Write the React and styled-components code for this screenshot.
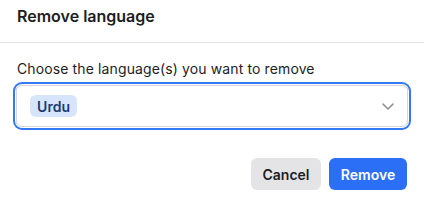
import React from 'react';
import styled, { createGlobalStyle } from 'styled-components';

const GlobalStyle = createGlobalStyle`
    body {
        margin: 0;
        background: #ffffff;
        font-family: Inter, "Liberation Sans", sans-serif;
        color: #1d1d1f;
    }
`;

const Dialog = styled.div`
    width: 424px;
    height: 200px;
    display: flex;
    flex-direction: column;
`;

const Header = styled.div`
    height: 43px;
    box-sizing: border-box;
    padding: 6px 17px 0;
    border-bottom: 1px solid #e3e3e5;
`;

const Title = styled.h2`
    margin: 0;
    font-size: 16px;
    line-height: 21px;
    font-weight: 600;
    color: #1d1d1f;
`;

const Body = styled.div`
    padding: 16px 16px 0;
`;

const Label = styled.label`
    display: block;
    padding-left: 1px;
    font-size: 14px;
    line-height: 20px;
    letter-spacing: 0.12px;
    color: #1d1d1f;
    margin-bottom: 6px;
`;

const SelectBox = styled.div`
    height: 42px;
    box-sizing: border-box;
    display: flex;
    align-items: center;
    justify-content: space-between;
    padding: 0 12px 0 13px;
    border: 1px solid #d6d6da;
    border-radius: 6px;
    box-shadow: 0 0 0 1px #ffffff, 0 0 0 3px #3478f6;
`;

const Chip = styled.span`
    display: inline-flex;
    align-items: center;
    height: 22px;
    padding: 0 7px;
    border-radius: 6px;
    background: #d6e5fc;
    color: #1c3b70;
    font-size: 14px;
    font-weight: 600;
    letter-spacing: 0.1px;
`;

const Footer = styled.div`
    display: flex;
    justify-content: flex-end;
    gap: 8px;
    padding: 31px 17px 0;
`;

const Button = styled.button`
    height: 32px;
    min-width: ${(p) => (p.$primary ? '78px' : '70px')};
    padding: 0 11px;
    border: none;
    border-radius: 6px;
    font-family: inherit;
    font-size: 14px;
    font-weight: 600;
    cursor: pointer;
    background: ${(p) => (p.$primary ? '#2b6ff6' : '#e4e4e7')};
    color: ${(p) => (p.$primary ? '#ffffff' : '#1d1d1f')};
`;

const Chevron = () => (
    <svg width="14" height="14" viewBox="0 0 14 14" fill="none">
        <path d="M2 5l5 5 5-5" stroke="#8e8e93" strokeWidth="1.6" strokeLinecap="round" strokeLinejoin="round" />
    </svg>
);

const App = () => {
    return (
        <Dialog>
            <GlobalStyle />
            <Header>
                <Title>Remove language</Title>
            </Header>
            <Body>
                <Label>Choose the language(s) you want to remove</Label>
                <SelectBox>
                    <Chip>Urdu</Chip>
                    <Chevron />
                </SelectBox>
            </Body>
            <Footer>
                <Button>Cancel</Button>
                <Button $primary>Remove</Button>
            </Footer>
        </Dialog>
    );
};

export default App;
